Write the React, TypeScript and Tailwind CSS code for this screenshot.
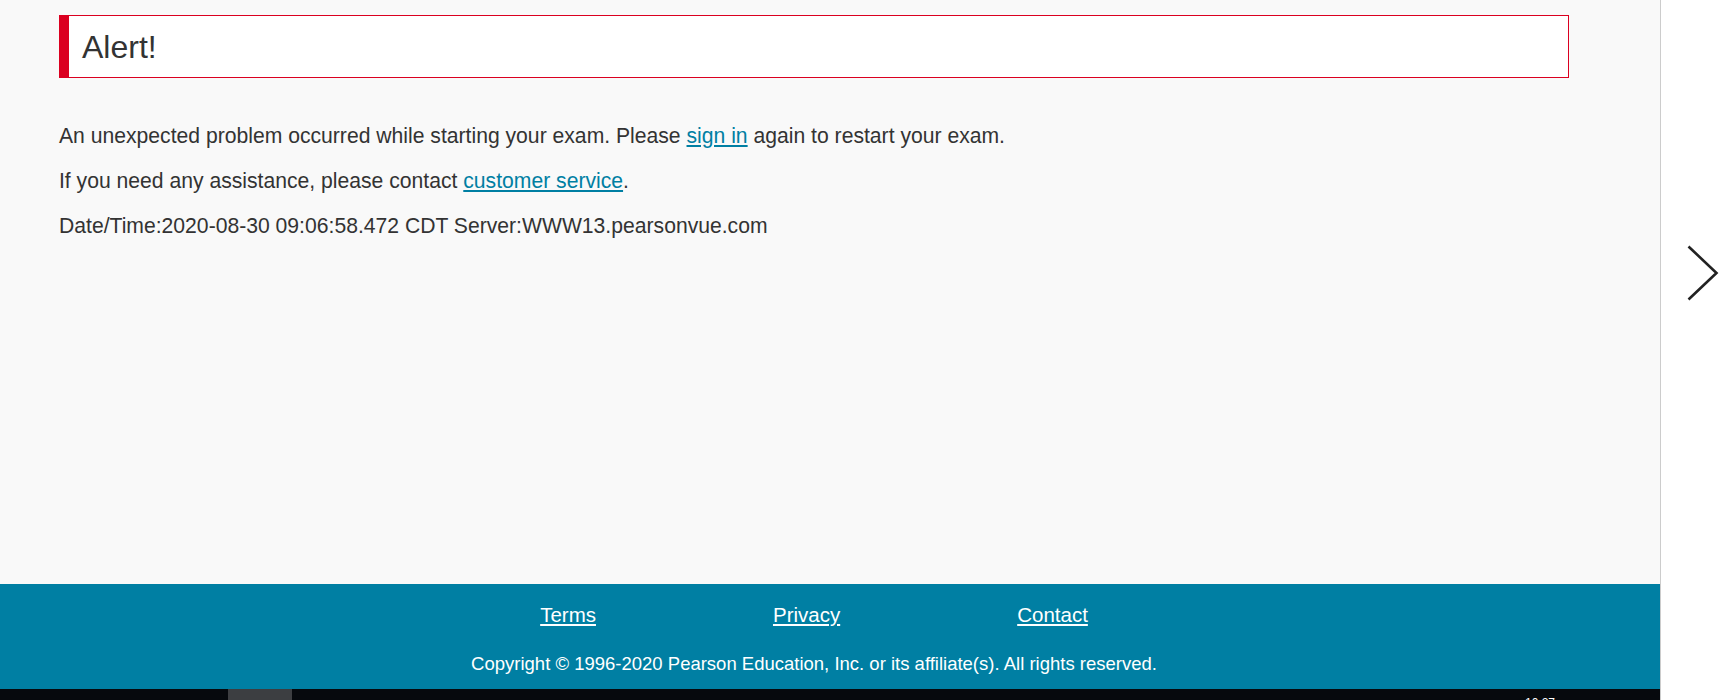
export default function App() {
  return (
    <div
      className="flex h-[700px] w-[1721px] overflow-hidden bg-white"
      style={{ fontFamily: '"Liberation Sans", Arial, sans-serif' }}
    >
      <div className="flex w-[1660px] flex-col bg-[#f9f9f9]">
        <main className="flex-1 pl-[59px] pt-[15px]">
          <div className="flex h-[63px] w-[1510px] items-center border border-l-[10px] border-[#db0020] bg-white pl-[13px]">
            <h1 className="text-[32px] leading-none text-[#333]">Alert!</h1>
          </div>
          <div className="pt-[44px] text-[21.15px] leading-[27px] text-[#333]">
            <p className="mb-[18px]">
              An unexpected problem occurred while starting your exam. Please{" "}
              <a href="#" className="text-[#007fa3] underline">
                sign in
              </a>{" "}
              again to restart your exam.
            </p>
            <p className="mb-[18px]">
              If you need any assistance, please contact{" "}
              <a href="#" className="text-[#007fa3] underline">
                customer service
              </a>
              .
            </p>
            <p>Date/Time:2020-08-30 09:06:58.472 CDT Server:WWW13.pearsonvue.com</p>
          </div>
        </main>

        <footer className="flex h-[105px] flex-col items-center bg-[#007fa3] pr-[32px] pt-[19px] text-white">
          <nav className="flex gap-[177px] text-[20.5px] leading-[24px]">
            <a href="#" className="underline">Terms</a>
            <a href="#" className="underline">Privacy</a>
            <a href="#" className="underline">Contact</a>
          </nav>
          <p className="mt-[26px] text-[18.5px] leading-[22px]">
            Copyright © 1996-2020 Pearson Education, Inc. or its affiliate(s). All rights reserved.
          </p>
        </footer>

        <div className="flex h-[11px] bg-[#06090d]">
          <div className="ml-[228px] h-full w-[64px] bg-[#3c3e41]" />
          <span className="ml-[1233px] mt-[8px] text-[12px] leading-none text-white">10:27</span>
        </div>
      </div>

      <aside className="w-[61px] border-l border-[#cccccc] bg-white pl-[26px] pt-[245px]">
        <svg width="32" height="56" viewBox="0 0 32 56" fill="none">
          <polyline points="1.5,1.5 29.5,28 1.5,54.5" stroke="#222" strokeWidth="2.6" />
        </svg>
      </aside>
    </div>
  );
}
